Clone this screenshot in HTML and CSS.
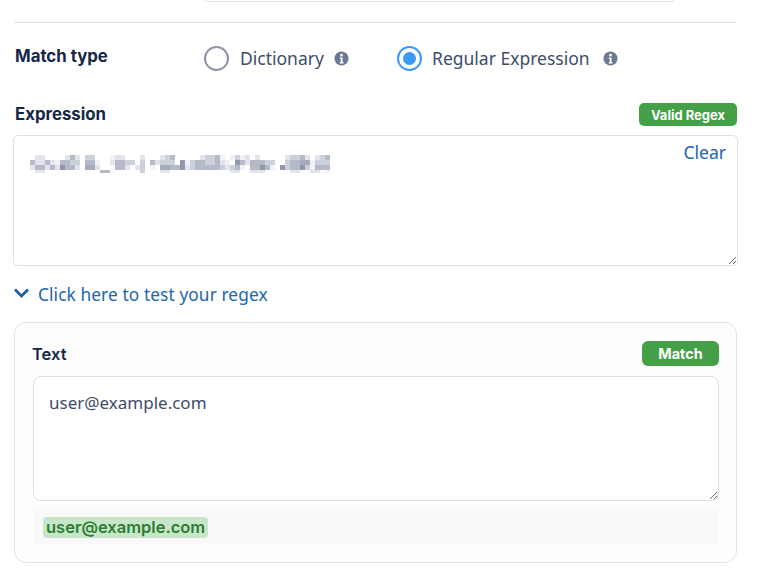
FILE: index.html
```html
<!DOCTYPE html>
<html lang="en">
<head>
<meta charset="utf-8">
<title>Match type</title>
<link rel="stylesheet" href="styles.css">
</head>
<body>
<main class="page">
  <div class="stub-row"><div class="stub"></div></div>
  <hr class="rule">
  <section class="match-row">
    <h2 class="label match-label">Match type</h2>
    <div class="options">
      <label class="option option-dict">
        <span class="radio"></span><span class="option-text">Dictionary</span>
        <svg class="info" viewBox="0 0 16 16"><circle cx="8" cy="8" r="7.5" fill="#6b7a94"/><circle cx="8" cy="4.4" r="1.4" fill="#fff"/><path d="M6.2 6.8h2.9v5h1v1.4H6.2v-1.4h1v-3.6h-1z" fill="#fff"/></svg>
      </label>
      <label class="option option-re">
        <span class="radio radio-on"></span><span class="option-text">Regular Expression</span>
        <svg class="info" viewBox="0 0 16 16"><circle cx="8" cy="8" r="7.5" fill="#6b7a94"/><circle cx="8" cy="4.4" r="1.4" fill="#fff"/><path d="M6.2 6.8h2.9v5h1v1.4H6.2v-1.4h1v-3.6h-1z" fill="#fff"/></svg>
      </label>
    </div>
  </section>
  <section class="expr-head">
    <h2 class="label">Expression</h2>
    <span class="badge badge-valid">Valid Regex</span>
  </section>
  <div class="expr-box">
    <textarea class="area expr-area" aria-label="Expression"></textarea>
    <svg class="blur" viewBox="30 155 300 20" aria-hidden="true">
      <path fill="#f1f2f5" d="M110 155h5v5h-5zM220 155h5v5h-5zM230 155h5v5h-5zM240 155h5v5h-5zM55 160h5v5h-5zM95 160h5v5h-5zM185 160h5v5h-5zM225 160h5v5h-5zM310 160h5v5h-5zM150 165h5v5h-5zM240 165h5v5h-5zM270 165h5v5h-5zM310 165h5v5h-5zM325 170h5v3h-5z"/>
      <path fill="#e1e4ea" d="M35 155h10v5h-10zM65 155h5v5h-5zM75 155h5v5h-5zM115 155h10v5h-10zM140 155h5v5h-5zM160 155h5v5h-5zM200 155h5v5h-5zM245 155h5v5h-5zM255 155h5v5h-5zM285 155h5v5h-5zM305 155h5v5h-5zM315 155h5v5h-5zM35 160h10v5h-10zM50 160h5v5h-5zM110 160h5v5h-5zM155 160h5v5h-5zM220 160h5v5h-5zM245 160h5v5h-5zM30 165h5v5h-5zM45 165h5v5h-5zM55 165h5v5h-5zM75 165h5v5h-5zM95 165h5v5h-5zM125 165h5v5h-5zM135 165h5v5h-5zM185 165h5v5h-5zM225 165h5v5h-5zM35 170h10v3h-10zM160 170h10v3h-10zM230 170h10v3h-10zM250 170h15v3h-15zM290 170h10v3h-10zM310 170h10v3h-10z"/>
      <path fill="#ccd0da" d="M85 155h10v5h-10zM165 155h5v5h-5zM205 155h10v5h-10zM235 155h5v5h-5zM290 155h10v5h-10zM320 155h5v5h-5zM70 160h10v5h-10zM125 160h10v5h-10zM140 160h5v5h-5zM160 160h15v5h-15zM190 160h5v5h-5zM205 160h10v5h-10zM265 160h10v5h-10zM285 160h5v5h-5zM315 160h15v5h-15zM140 165h5v5h-5zM190 165h5v5h-5zM220 165h5v5h-5zM230 165h5v5h-5zM285 165h5v5h-5zM305 165h5v5h-5zM140 170h5v3h-5z"/>
      <path fill="#b4bac8" d="M70 155h5v5h-5zM170 155h5v5h-5zM215 155h5v5h-5zM300 155h5v5h-5zM325 155h5v5h-5zM30 160h5v5h-5zM45 160h5v5h-5zM60 160h10v5h-10zM85 160h10v5h-10zM115 160h10v5h-10zM150 160h5v5h-5zM195 160h10v5h-10zM215 160h5v5h-5zM240 160h5v5h-5zM250 160h15v5h-15zM290 160h10v5h-10zM35 165h10v5h-10zM50 165h5v5h-5zM65 165h10v5h-10zM115 165h10v5h-10zM170 165h10v5h-10zM195 165h25v5h-25zM235 165h5v5h-5zM250 165h10v5h-10zM265 165h5v5h-5zM290 165h10v5h-10zM315 165h15v5h-15zM100 170h10v3h-10z"/>
      <path fill="#a5acbd" d="M85 165h10v5h-10zM160 165h10v5h-10zM300 160h10v5h-10z"/>
      <path fill="#8f98ae" d="M180 160h5v5h-5zM235 160h5v5h-5zM60 165h5v5h-5zM180 165h5v5h-5zM260 165h5v5h-5zM280 165h5v5h-5zM300 165h5v5h-5z"/>
    </svg>
    <a class="clear" href="#">Clear</a>
  </div>
  <a class="toggle" href="#">
    <svg class="chevron" viewBox="0 0 15 10"><path d="M1 1.6 7.5 8 14 1.6" fill="none" stroke="#1d5fa8" stroke-width="2.8"/></svg>
    <span>Click here to test your regex</span>
  </a>
  <section class="panel">
    <div class="panel-head">
      <h3 class="label text-label">Text</h3>
      <span class="badge badge-match">Match</span>
    </div>
    <textarea class="area text-area" aria-label="Text">user@example.com</textarea>
    <div class="result"><mark class="hit">user@example.com</mark></div>
  </section>
</main>
</body>
</html>
```
FILE: styles.css
```css
* { box-sizing: border-box; }
html, body { margin: 0; padding: 0; background: #fff; }
body { font-family: "Noto Sans", "Liberation Sans", sans-serif; color: #3d4d69; height: 585px; overflow: hidden; }
.page { width: 757px; padding: 0 19px 0 14px; }
.stub-row { height: 2px; padding-left: 190px; padding-right: 64px; }
.stub { height: 2px; border: 1px solid #e2e4e8; border-top: 0; border-radius: 0 0 4px 4px; }
.rule { margin: 20px 0 0; height: 1px; width: 723px; border: 0; background: #dfe3e8; }
.label { margin: 0; font-family: Inter, sans-serif; font-weight: 700; font-size: 16.8px; color: #152747; }
.match-row { display: flex; height: 48px; margin-top: 11px; align-items: center; }
.match-label { width: 190px; margin: -4px 0 0 1px; }
.options { display: flex; margin-left: -1px; }
.option { display: flex; align-items: center; }
.option-dict { width: 193px; }
.option-dict .info { margin-left: 10px; }
.option-re .info { margin-left: 13px; }
.radio { width: 25px; height: 25px; border: 2px solid #8d94a5; border-radius: 50%; background: #fff; margin-right: 11px; }
.radio-on { margin-right: 10px; border-color: #3a98f6; padding: 4px; background: #3a98f6 content-box; }
.option-text { font-size: 17.5px; }
.info { width: 15px; height: 15px; }
.expr-head { display: flex; width: 723px; justify-content: space-between; align-items: center; height: 23px; margin-top: 21px; }
.expr-head .label { margin: -2px 0 0 1px; }
.badge { display: flex; align-items: center; justify-content: center; background: #43a047; color: #fff; font-family: Inter, sans-serif; font-weight: 700; }
.badge-valid { width: 98px; height: 23px; border-radius: 5px; font-size: 13px; }
.badge-match { width: 77px; height: 25px; border-radius: 6px; font-size: 14.4px; }
.expr-box { position: relative; width: 725px; height: 131px; margin: 9px 0 0 -1px; }
.area { display: block; margin: 0; padding: 14px 15px; border: 1px solid #e0e0e2; border-radius: 5px; background: #fff; font-family: "Noto Sans", sans-serif; font-size: 17px; color: #3d4d69; outline: none; }
.expr-area { width: 725px; height: 131px; }
.blur { position: absolute; left: 17px; top: 20px; width: 300px; height: 20px; }
.clear { position: absolute; top: 5px; right: 12px; font-size: 17.5px; color: #2165b0; text-decoration: none; }
.toggle { display: flex; align-items: center; height: 24px; margin-top: 16px; font-size: 17.3px; color: #2165b0; text-decoration: none; letter-spacing: .1px; }
.chevron { flex: none; width: 15px; height: 10px; margin: -2px 9px 0 0; }
.panel { width: 723px; height: 241px; margin-top: 16px; padding: 18px 17px 0 18px; border: 1px solid #e2e2e4; border-radius: 12px; background: #fdfdfd; }
.panel-head { display: flex; justify-content: space-between; align-items: center; height: 25px; }
.text-label { font-weight: 600; font-size: 16.5px; margin-left: -1px; }
.text-area { width: 686px; height: 125px; margin-top: 10px; border-radius: 8px; }
.result { display: flex; align-items: center; height: 35px; margin-top: 9px; padding-left: 10px; background: #f9f9f9; border-radius: 2px; }
.hit { display: block; height: 21px; padding: 0 3px 0 3px; line-height: 21px; background: #c8e6c9; border-radius: 4px; color: #2e7d32; font-family: Inter, sans-serif; font-weight: 600; font-size: 16.5px; }
```
